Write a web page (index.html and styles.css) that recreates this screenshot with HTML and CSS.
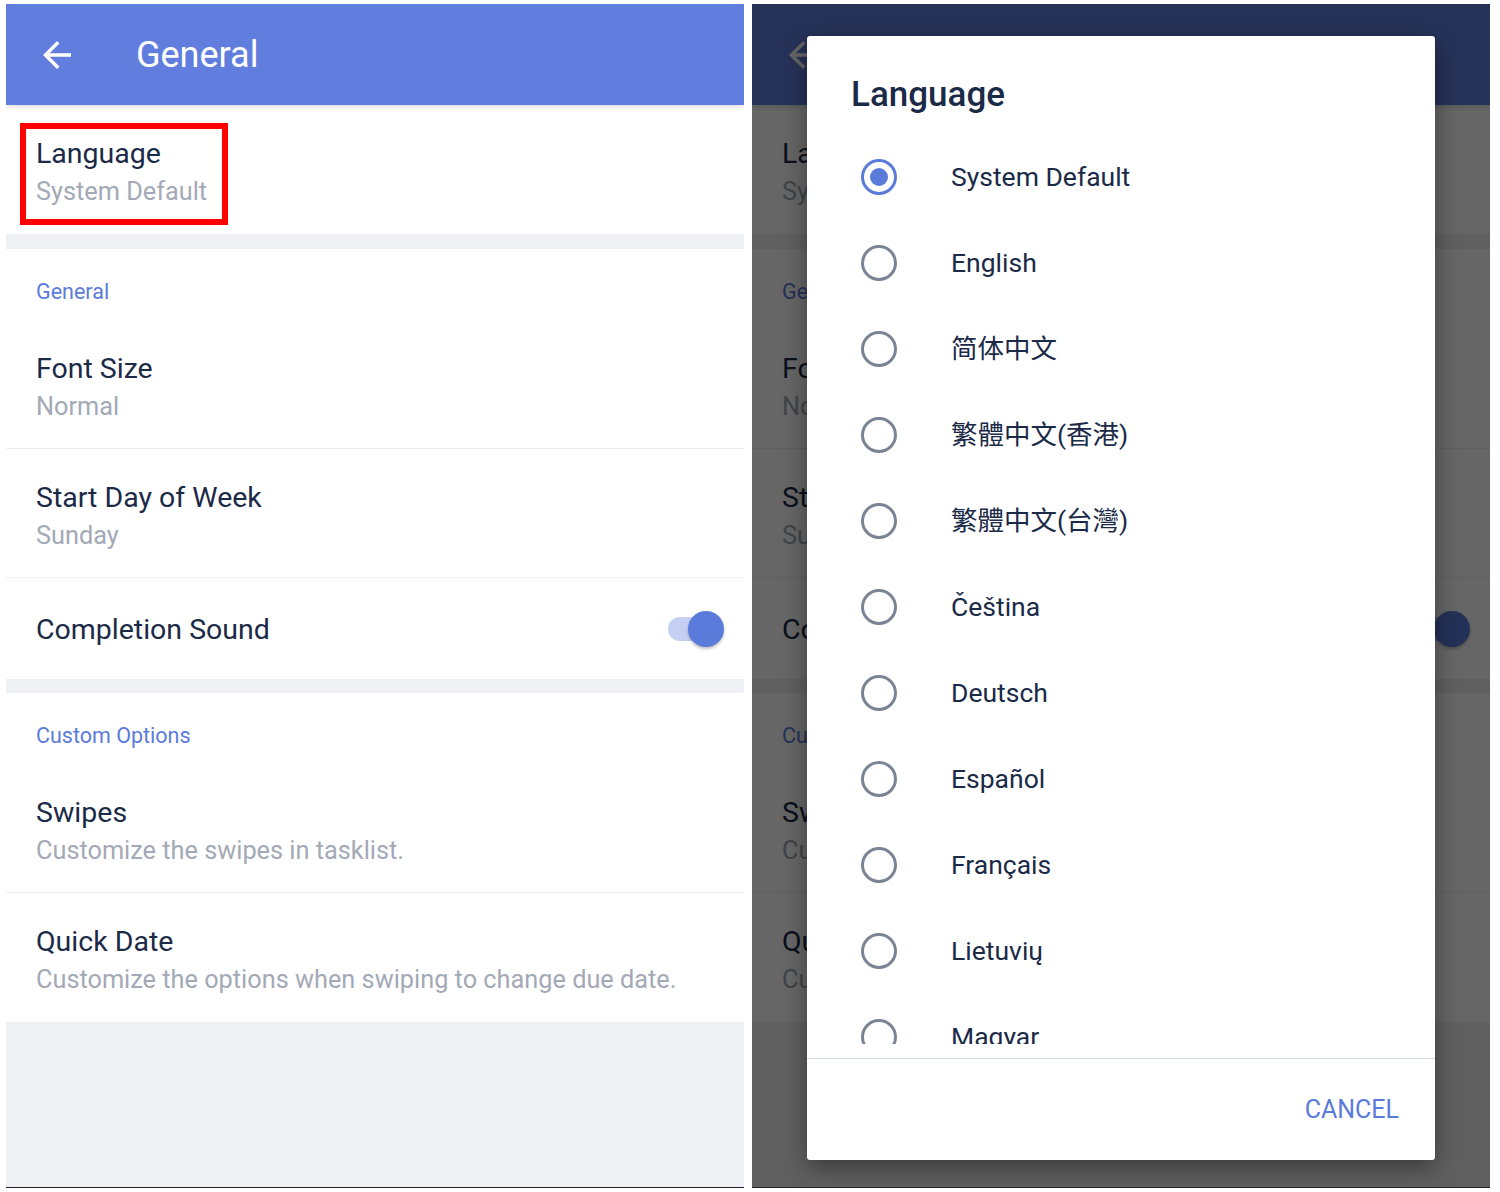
FILE: index.html
```html
<!DOCTYPE html>
<html lang="en">
<head>
<meta charset="utf-8">
<title>General settings</title>
<link rel="stylesheet" href="styles.css">
</head>
<body>
<div class="screens">
  <div class="phone">
    <header class="appbar">
      <svg class="back" viewBox="0 0 24 24"><path d="M20 11H7.83l5.59-5.59L12 4l-8 8 8 8 1.41-1.41L7.83 13H20v-2z"/></svg>
      <h1 class="appbar-title">General</h1>
    </header>
    <section class="group">
      <div class="item">
        <div class="item-title">Language</div>
        <div class="item-sub">System Default</div>
        <div class="highlight"></div>
      </div>
    </section>
    <section class="group">
      <div class="group-label">General</div>
      <div class="item bordered">
        <div class="item-title">Font Size</div>
        <div class="item-sub">Normal</div>
      </div>
      <div class="item bordered">
        <div class="item-title">Start Day of Week</div>
        <div class="item-sub">Sunday</div>
      </div>
      <div class="item-switch">
        <div class="item-title">Completion Sound</div>
        <div class="toggle"><span class="track"></span><span class="thumb"></span></div>
      </div>
    </section>
    <section class="group">
      <div class="group-label">Custom Options</div>
      <div class="item bordered">
        <div class="item-title">Swipes</div>
        <div class="item-sub">Customize the swipes in tasklist.</div>
      </div>
      <div class="item">
        <div class="item-title">Quick Date</div>
        <div class="item-sub">Customize the options when swiping to change due date.</div>
      </div>
    </section>
  </div>

  <div class="phone">
    <header class="appbar">
      <svg class="back" viewBox="0 0 24 24"><path d="M20 11H7.83l5.59-5.59L12 4l-8 8 8 8 1.41-1.41L7.83 13H20v-2z"/></svg>
      <h1 class="appbar-title">General</h1>
    </header>
    <section class="group">
      <div class="item">
        <div class="item-title">Language</div>
        <div class="item-sub">System Default</div>
      </div>
    </section>
    <section class="group">
      <div class="group-label">General</div>
      <div class="item bordered">
        <div class="item-title">Font Size</div>
        <div class="item-sub">Normal</div>
      </div>
      <div class="item bordered">
        <div class="item-title">Start Day of Week</div>
        <div class="item-sub">Sunday</div>
      </div>
      <div class="item-switch">
        <div class="item-title">Completion Sound</div>
        <div class="toggle"><span class="track"></span><span class="thumb"></span></div>
      </div>
    </section>
    <section class="group">
      <div class="group-label">Custom Options</div>
      <div class="item bordered">
        <div class="item-title">Swipes</div>
        <div class="item-sub">Customize the swipes in tasklist.</div>
      </div>
      <div class="item">
        <div class="item-title">Quick Date</div>
        <div class="item-sub">Customize the options when swiping to change due date.</div>
      </div>
    </section>

    <div class="scrim"></div>

    <div class="dialog">
      <h2 class="dialog-title">Language</h2>
      <div class="options">
        <div class="option"><span class="radio on"></span><span class="label">System Default</span></div>
        <div class="option"><span class="radio"></span><span class="label">English</span></div>
        <div class="option"><span class="radio"></span><span class="label sc" lang="zh-CN">简体中文</span></div>
        <div class="option"><span class="radio"></span><span class="label tc" lang="zh-HK">繁體中文(香港)</span></div>
        <div class="option"><span class="radio"></span><span class="label tc" lang="zh-TW">繁體中文(台灣)</span></div>
        <div class="option"><span class="radio"></span><span class="label">Čeština</span></div>
        <div class="option"><span class="radio"></span><span class="label">Deutsch</span></div>
        <div class="option"><span class="radio"></span><span class="label">Español</span></div>
        <div class="option"><span class="radio"></span><span class="label">Français</span></div>
        <div class="option"><span class="radio"></span><span class="label">Lietuvių</span></div>
        <div class="option"><span class="radio"></span><span class="label">Magyar</span></div>
      </div>
      <div class="dialog-divider"></div>
      <div class="dialog-footer"><span class="btn">CANCEL</span></div>
    </div>
  </div>
</div>
</body>
</html>
```

FILE: styles.css
```css
* { box-sizing: border-box; }

html, body {
  margin: 0;
  padding: 0;
  background: #ffffff;
}

body {
  font-family: Roboto, "Noto Sans CJK SC", sans-serif;
  color: #1b2a47;
}

.screens {
  display: flex;
  gap: 8px;
  padding: 4px 0 0 6px;
}

.phone {
  position: relative;
  width: 738px;
  height: 1184px;
  background: #eff0f3;
  border-bottom: 1px solid #222;
  overflow: hidden;
  display: flex;
  flex-direction: column;
  gap: 14px;
}

.appbar {
  position: relative;
  z-index: 1;
  height: 101px;
  margin-bottom: -14px;
  flex: none;
  display: flex;
  align-items: center;
  gap: 58px;
  padding-left: 30px;
  background: #617ede;
  box-shadow: 0 2px 5px rgba(0, 0, 0, 0.13);
}

.back {
  width: 42px;
  height: 42px;
  fill: #ffffff;
  flex: none;
}

.appbar-title {
  margin: 0;
  font-size: 36px;
  font-weight: 400;
  color: #ffffff;
  line-height: 46px;
}

.group {
  background: #ffffff;
  flex: none;
}

.group:first-of-type {
  margin-bottom: 1px;
}

.group-label {
  padding: 30px 0 15px 30px;
  font-size: 21.5px;
  line-height: 26px;
  color: #5b7bdb;
}

.item {
  position: relative;
  padding: 31px 20px 22px 30px;
}

.item.bordered {
  padding-bottom: 21px;
  border-bottom: 1px solid #eceef2;
}

.item-title {
  font-size: 28.5px;
  line-height: 36px;
  color: #1b2a47;
}

.item-sub {
  font-size: 25.3px;
  line-height: 40px;
  color: #a3a9b6;
}

.item-switch {
  height: 101px;
  display: flex;
  align-items: center;
  justify-content: space-between;
  padding: 3px 20px 0 30px;
}

.toggle {
  position: relative;
  width: 56px;
  height: 36px;
  margin-top: -3px;
}

.track {
  position: absolute;
  left: 0;
  top: 6px;
  width: 46px;
  height: 24px;
  border-radius: 12px;
  background: #c4cff3;
}

.thumb {
  position: absolute;
  right: 0;
  top: 0;
  width: 36px;
  height: 36px;
  border-radius: 50%;
  background: #5b7bdb;
  box-shadow: 0 2px 3px rgba(0, 0, 0, 0.25);
}

.highlight {
  position: absolute;
  left: 14px;
  top: 18px;
  width: 208px;
  height: 102px;
  border: 6px solid #ff0000;
}

.scrim {
  position: absolute;
  inset: 0;
  z-index: 2;
  background: rgba(0, 0, 0, 0.6);
}

.dialog {
  position: absolute;
  z-index: 3;
  left: 55px;
  top: 32px;
  width: 628px;
  height: 1124px;
  background: #ffffff;
  border-radius: 3px;
  box-shadow: 0 8px 24px rgba(0, 0, 0, 0.4);
  display: flex;
  flex-direction: column;
}

.dialog-title {
  margin: 0;
  padding: 37px 44px 17px;
  font-size: 35px;
  font-weight: 500;
  line-height: 44px;
  color: #1b2a47;
}

.options {
  height: 910px;
  overflow: hidden;
  flex: none;
}

.option {
  height: 86px;
  display: flex;
  align-items: center;
  gap: 54px;
  padding-left: 54px;
}

.radio {
  position: relative;
  width: 36px;
  height: 36px;
  flex: none;
  border-radius: 50%;
  border: 3px solid #7b8494;
}

.radio.on {
  border-color: #5b7bdb;
}

.radio.on::after {
  content: "";
  position: absolute;
  left: 6px;
  top: 6px;
  width: 18px;
  height: 18px;
  border-radius: 50%;
  background: #5b7bdb;
}

.label {
  font-size: 26.5px;
  line-height: 34px;
  color: #1b2a47;
}

.label.sc {
  font-family: Roboto, "Noto Sans CJK SC", sans-serif;
}

.label.tc {
  font-family: Roboto, "Noto Sans CJK TC", sans-serif;
}

.dialog-divider {
  margin-top: 14px;
  height: 1px;
  background: #d5d9e1;
  flex: none;
}

.dialog-footer {
  flex: 1;
  display: flex;
  align-items: center;
  justify-content: flex-end;
  padding-right: 36px;
}

.btn {
  font-size: 25px;
  color: #5b7bdb;
  line-height: 32px;
}
```
